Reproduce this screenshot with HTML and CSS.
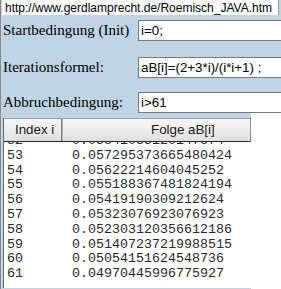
FILE: index.html
```html
<!DOCTYPE html>
<html>
<head>
<meta charset="utf-8">
<link rel="stylesheet" href="styles.css">
</head>
<body>
<div class="page">
  <div class="url">http://www.gerdlamprecht.de/Roemisch_JAVA.htm</div>
  <div class="row r1"><span class="lbl">Startbedingung (Init)</span><div class="inp">i=0;</div></div>
  <div class="row r2"><span class="lbl">Iterationsformel:</span><div class="inp">aB[i]=(2+3*i)/(i*i+1) ;</div></div>
  <div class="row r3"><span class="lbl">Abbruchbedingung:</span><div class="inp">i&gt;61</div></div>
  <div class="lower">
    <div class="table">
      <div class="thead">
        <div class="th c1">Index i</div>
        <div class="th c2">Folge aB[i]</div>
      </div>
      <div class="tbody">
        <div class="rows">
          <div class="tr"><span class="td1">52</span><span class="td2">0.05841035120147874</span></div>
          <div class="tr"><span class="td1">53</span><span class="td2">0.057295373665480424</span></div>
          <div class="tr"><span class="td1">54</span><span class="td2">0.05622214604045252</span></div>
          <div class="tr"><span class="td1">55</span><span class="td2">0.055188367481824194</span></div>
          <div class="tr"><span class="td1">56</span><span class="td2">0.05419190309212624</span></div>
          <div class="tr"><span class="td1">57</span><span class="td2">0.05323076923076923</span></div>
          <div class="tr"><span class="td1">58</span><span class="td2">0.052303120356612186</span></div>
          <div class="tr"><span class="td1">59</span><span class="td2">0.051407237219988515</span></div>
          <div class="tr"><span class="td1">60</span><span class="td2">0.05054151624548736</span></div>
          <div class="tr"><span class="td1">61</span><span class="td2">0.04970445996775927</span></div>
        </div>
      </div>
    </div>
    <div class="fill"></div>
  </div>
</div>
</body>
</html>
```
FILE: styles.css
```css
html, body {
  margin: 0;
  padding: 0;
  height: 100%;
}
body {
  background: #bfd4e4;
  overflow: hidden;
}
.page {
  height: 289px;
  border-left: 1px solid #8a8a8a;
  box-sizing: border-box;
  display: flex;
  flex-direction: column;
}
.url {
  margin-left: 1px;
  width: 277px;
  height: 15px;
  flex: none;
  box-sizing: border-box;
  background: #fff;
  border-right: 1px solid #9a9a9a;
  padding: 1px 0 0 3px;
  font: 12px "Liberation Sans", Arial, sans-serif;
  line-height: 14px;
  color: #000;
  white-space: nowrap;
  overflow: hidden;
}
.row {
  display: flex;
  align-items: flex-start;
  flex: none;
}
.r1 { margin-top: 5px; }
.r2 { margin-top: 16px; }
.r3 { margin-top: 14px; }
.lbl {
  width: 137px;
  flex: none;
  box-sizing: border-box;
  padding-left: 2px;
  font: 15px "Liberation Serif", "Times New Roman", serif;
  line-height: 21px;
  color: #000;
  white-space: nowrap;
}
.inp {
  flex: 1;
  min-width: 0;
  height: 21px;
  box-sizing: border-box;
  background: #fff;
  border: 1px solid #7a7a7a;
  border-right: none;
  padding-left: 2px;
  font: 13.33px "Liberation Sans", Arial, sans-serif;
  line-height: 19px;
  color: #000;
  white-space: nowrap;
  overflow: hidden;
}
.lower {
  flex: 1;
  display: flex;
  min-height: 0;
}
.table {
  width: 248px;
  flex: none;
  margin: 5px 0 1px 2px;
  box-sizing: border-box;
  border-left: 1px solid #6a6a6a;
  background: #fff;
  display: flex;
  flex-direction: column;
  min-height: 0;
}
.thead {
  display: flex;
  flex: none;
  height: 24px;
  box-sizing: border-box;
  border-top: 1px solid #a0a0a0;
  border-bottom: 1px solid #2a2a2a;
  border-right: 1px solid #8c8c8c;
  background: linear-gradient(#f7f7f7, #ececec 50%, #dedede);
}
.th {
  font: 13.33px "Liberation Sans", Arial, sans-serif;
  line-height: 22px;
  color: #1a1a1a;
  white-space: nowrap;
}
.c1 {
  width: 58px;
  box-sizing: border-box;
  padding-left: 11px;
  border-right: 1px solid #7a7a7a;
}
.c2 {
  flex: 1;
  padding-left: 88px;
  border-left: 1px solid #b8b8b8;
}
.tbody {
  flex: 1;
  overflow: hidden;
  min-height: 0;
}
.rows {
  margin-top: -8px;
}
.tr {
  display: flex;
  height: 14.8px;
  font: 13.33px "Liberation Mono", "Courier New", monospace;
  line-height: 14.8px;
  color: #2a2a2a;
  white-space: nowrap;
}
.td1 {
  width: 68px;
  flex: none;
  box-sizing: border-box;
  padding-left: 3px;
}
.td2 {
  flex: none;
}
.fill {
  flex: 1;
  background: #fff;
}
```
